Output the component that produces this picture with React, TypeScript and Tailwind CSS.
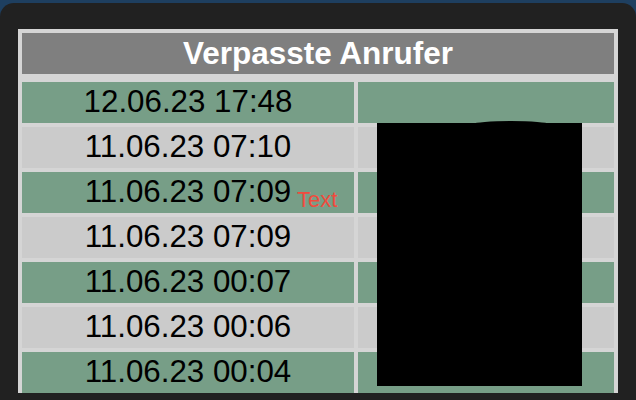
const rows = [
  "12.06.23 17:48",
  "11.06.23 07:10",
  "11.06.23 07:09",
  "11.06.23 07:09",
  "11.06.23 00:07",
  "11.06.23 00:06",
  "11.06.23 00:04",
];

export default function App() {
  return (
    <div
      className="relative w-[636px] h-[400px] overflow-hidden bg-[#1e3f60]"
      style={{ fontFamily: '"Liberation Sans", Arial, sans-serif' }}
    >
      <div className="mt-[3px] h-[397px] rounded-t-[14px] bg-[#212121] px-[18px] pt-[26px]">
        <div className="h-[364px] overflow-hidden bg-[#d5d5d5] p-[4px]">
          {/* header */}
          <div className="flex h-[41px] items-center justify-center bg-[#7f7f7f] text-[31.5px] font-bold leading-none text-white">
            Verpasste Anrufer
          </div>

          {/* rows */}
          <div className="mt-[8px] grid grid-cols-[332px_256px] gap-[4px]">
            {rows.map((r, i) => {
              const bg = i % 2 === 0 ? "bg-[#779e87]" : "bg-[#cbcbcb]";
              return (
                <div key={i} className="contents">
                  <div className={`flex h-[41px] items-center justify-center pb-[2px] text-[31.3px] leading-none text-black ${bg}`}>
                    {r}
                  </div>
                  <div className={`h-[41px] ${bg}`} />
                </div>
              );
            })}
          </div>
        </div>
      </div>

      {/* overlays */}
      <div className="absolute left-[297px] top-[189px] text-[22px] leading-[22px] text-[#f04b3d]">Text</div>
      <div className="absolute left-[474px] top-[121px] h-[6px] w-[74px] rounded-[50%] bg-black" />
      <div className="absolute left-[377px] top-[123px] h-[263px] w-[205px] bg-black" />
    </div>
  );
}
